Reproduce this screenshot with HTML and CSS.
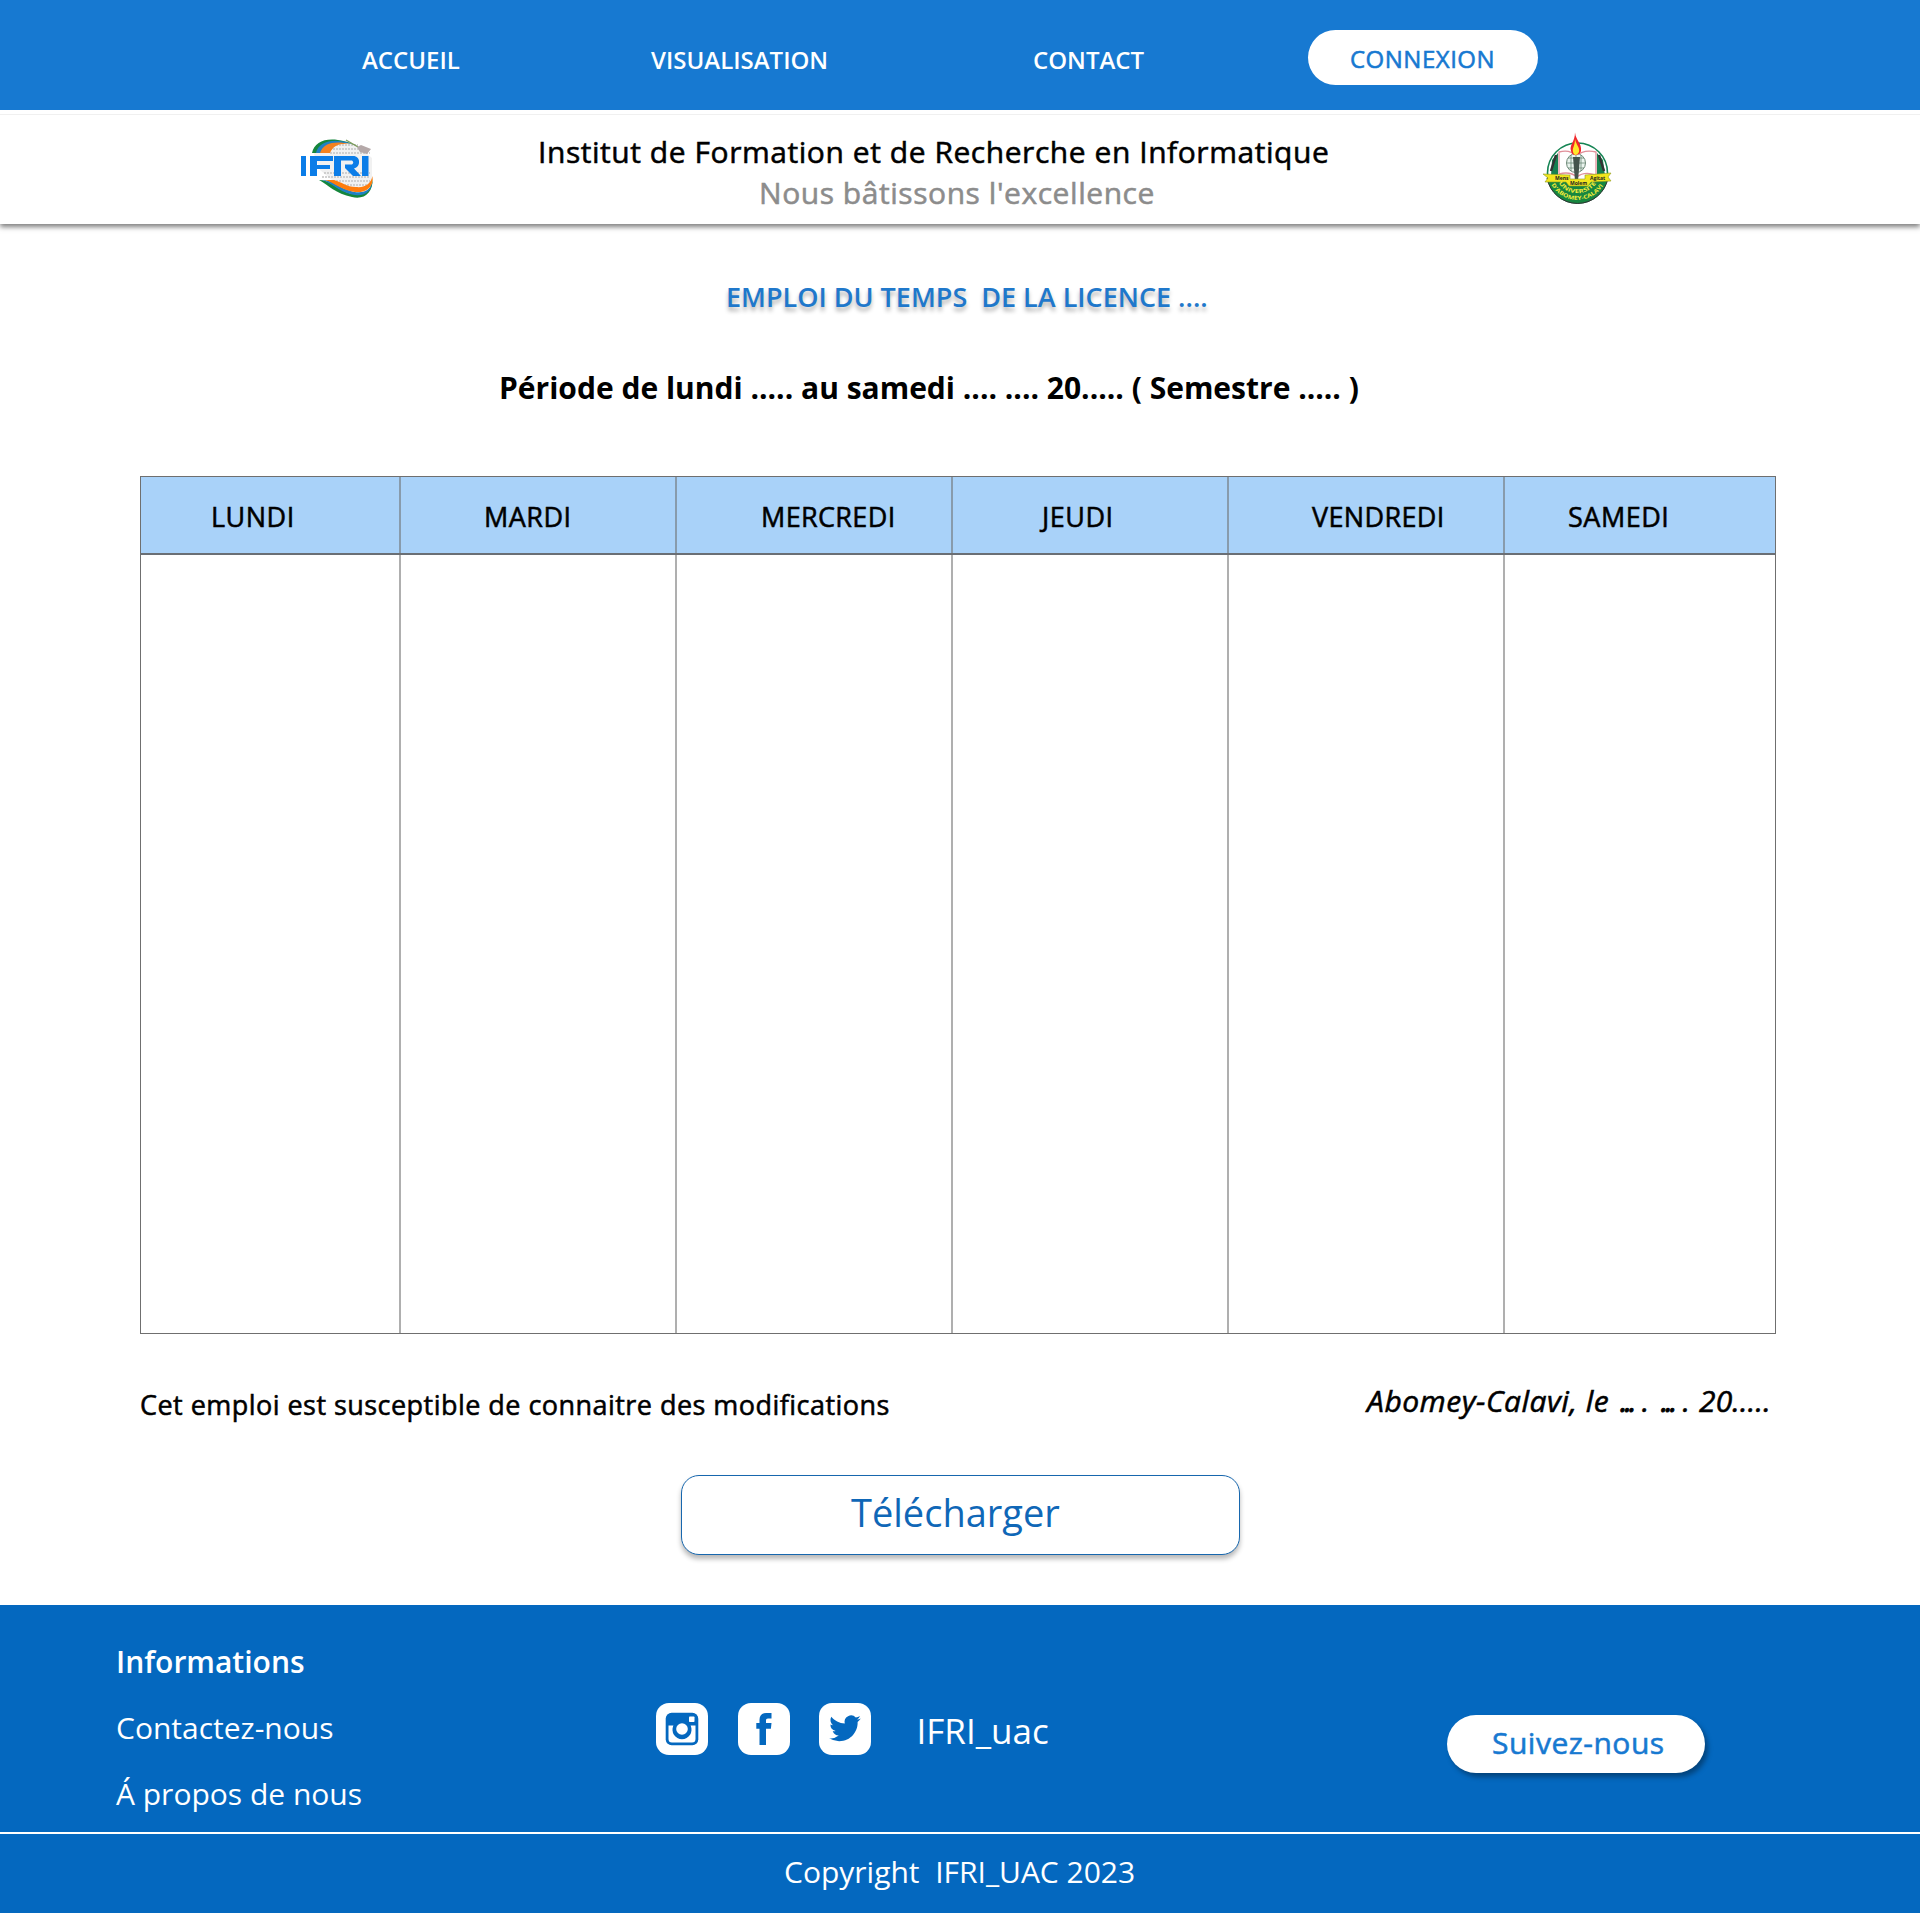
FILE: index.html
```html
<!DOCTYPE html>
<html lang="fr">
<head>
<meta charset="utf-8">
<title>IFRI - Emploi du temps</title>
<link rel="stylesheet" href="styles.css">
</head>
<body>
<nav class="nav">
  <a class="nav-link nav-home">ACCUEIL</a>
  <a class="nav-link nav-view">VISUALISATION</a>
  <a class="nav-link nav-contact">CONTACT</a>
  <a class="login medium"><span>CONNEXION</span></a>
</nav>
<header class="banner">
  <svg class="logo-ifri" viewBox="0 0 120 90" width="120" height="90">
    <path d="M34 34C38 24 50 20 60 20C70 21 77 24 80 28L92 38V62L90 70C76 74 62 66 52 60L40 50Z" fill="#f1f1f1"/>
    <path d="M50 25H78M50 29H84M50 33H90M44 53H90M42 57H90M50 61H90M58 65H88" stroke="#c4c4c4" stroke-width="1.400" stroke-dasharray="2 1"/>
    <path d="M32 33C35 18 54 15 78 26C60 19 48 23 42 33Z" fill="#15863c"/>
    <path d="M36 33C39 20 56 18 72 24C58 21 49 25 45 33Z" fill="#2080c4"/>
    <path d="M40 33C44 22 56 21 70 24C59 23 53 26 50 33Z" fill="#f5821f"/>
    <path d="M39 60C50 60 54 67 66 72C78 77 92 74 92.500 58C93.500 73 84 80 72 77C56 74 48 65 39 60Z" fill="#15863c"/>
    <path d="M42 60C53 60 56 66 68 70C80 75 92 72 92.500 60C92.500 72 84 77 72 74.500C58 71 52 63 42 60Z" fill="#2080c4"/>
    <path d="M45 60H54C62 62 66 67 76 67C86 68 91 63 92.500 56C94 68 85 73 75 72C60 70 54 62 45 60Z" fill="#ff7d0d"/>
    <path d="M66 20L78 27" stroke="#7d9b58" stroke-width="1.300"/>
    <path d="M77 27L81 25L91 29L87 34L80 32Z" fill="#b5a9a9"/>
    <path d="M21 36H26V56H21ZM30 36H53V41H37V45H50V49H37V56H30ZM54 36H73C81 36 81 47 74 48.500L81 56H73L65 48V44.500H72Q74.500 42.500 72 40.500H61V56H54ZM82 36H88.500V56H82Z" fill="#0b7de8"/>
  </svg>
  <div class="banner-text medium">
    <div class="school">Institut de Formation et de Recherche en Informatique</div>
    <div class="motto">Nous bâtissons l'excellence</div>
  </div>
  <svg class="logo-uac" viewBox="0 0 100 95" width="100" height="95">
    <circle cx="47.500" cy="53" r="30" fill="#fff" stroke="#148453" stroke-width="1.600"/>
    <path d="M17 58A31 31 0 0 0 78 58L48 64Z" fill="#168640" stroke="#333" stroke-width="1"/>
    <path d="M22 40L28 33V56H21ZM73 40L67 33V56H75Z" fill="#168050"/>
    <path d="M26 35L21 51M69 35L74 51" stroke="#333" stroke-width="2.500"/>
    <path d="M29 32Q40 29 46 36Q54 29 66 32V55Q54 51 47 57Q40 51 29 54Z" fill="#fff" stroke="#e0909a" stroke-width="1.300"/>
    <circle cx="46" cy="43" r="9.500" fill="#eaf4ee" stroke="#6b8876"/>
    <path d="M37 43H55M38 38H54M38 48H54M41 35V51M46 33V53M51 35V51" stroke="#6b8876" fill="none" stroke-width=".8"/>
    <path d="M43 37H50L48 61H45Z" fill="#43534c"/>
    <path d="M45 12.500C46 21 52 23 51 31C50 36 42 37 41 31C39 25 45 22 45 12.500Z" fill="#f0262c"/>
    <path d="M45 19C46 25 50 27 49 32C47 36 44 36 43 32C42 28 45 26 45 19Z" fill="#ffe62c"/>
    <path d="M13 54L40 55V59L55 59V55L81 53L78 57L81 61L61 62L58 66H39L36 62L15 62L18 58Z" fill="#f2e61d" stroke="#8f9b20" stroke-width=".6"/>
    <path id="uac-inner" d="M27.500 61.500A23 23 0 0 0 67.500 61.500" fill="none"/>
    <path id="uac-outer" d="M20.500 63A30 30 0 0 0 74.500 63" fill="none"/>
    <text class="seal-words"><tspan class="ribbon-word" x="25" y="60">Mens</tspan><tspan class="ribbon-word" x="40" y="64.500">Molem</tspan><tspan class="ribbon-word" x="60" y="60">Agitat</tspan><textPath href="#uac-inner" startOffset="2" textLength="44" lengthAdjust="spacingAndGlyphs">UNIVERSITE</textPath><textPath href="#uac-outer" startOffset="2" textLength="62" lengthAdjust="spacingAndGlyphs">D'ABOMEY-CALAVI</textPath></text>
  </svg>
</header>
<main class="main">
  <h1 class="title">EMPLOI DU TEMPS&nbsp; DE LA LICENCE ....</h1>
  <h2 class="period">Période de lundi ..... au samedi .... .... 20..... ( Semestre ..... )</h2>
  <div class="timetable">
    <div class="day"><div class="day-name medium d1">LUNDI</div></div>
    <div class="day"><div class="day-name medium d2">MARDI</div></div>
    <div class="day"><div class="day-name medium d3">MERCREDI</div></div>
    <div class="day"><div class="day-name medium d4">JEUDI</div></div>
    <div class="day"><div class="day-name medium d5">VENDREDI</div></div>
    <div class="day"><div class="day-name medium d6">SAMEDI</div></div>
  </div>
  <div class="notes">
    <p class="notice medium">Cet emploi est susceptible de connaitre des modifications</p>
    <p class="place medium">Abomey-Calavi, le <span class="dots">...</span> . <span class="dots">...</span> . <span class="year">20.....</span></p>
  </div>
  <button class="download"><span>Télécharger</span></button>
</main>
<footer class="footer">
  <div class="footer-main">
    <div class="info">
      <strong class="info-title">Informations</strong>
      <a class="info-contact">Contactez-nous</a>
      <a class="info-about">Á propos de nous</a>
    </div>
    <div class="social">
      <svg class="icon" viewBox="0 0 52 52" width="52" height="52">
        <rect width="52" height="52" rx="13" fill="#fff"/>
        <rect x="9.700" y="9.700" width="32.600" height="32.600" rx="6" fill="#0468bf"/>
        <path d="M12.500 22.500H17.500A9.500 9.500 0 1 0 34.500 22.500H39.500V36A3.500 3.500 0 0 1 36 39.500H16A3.500 3.500 0 0 1 12.500 36Z" fill="#fff"/>
        <circle cx="26" cy="26" r="9" fill="#0468bf"/>
        <circle cx="26" cy="26" r="5.800" fill="#fff"/>
        <rect x="33" y="13.500" width="5.500" height="5.500" rx=".8" fill="#fff"/>
      </svg>
      <svg class="icon" viewBox="0 0 52 52" width="52" height="52">
        <rect width="52" height="52" rx="13" fill="#fff"/>
        <path d="M33.500 10V15.500H30C28.500 15.500 28 16.300 28 17.500V20H33.500L32.900 25.800H28V42H21.500V25.800H18.300V20H21.500V17C21.500 12.500 24 10 28.200 10Z" fill="#0468bf"/>
      </svg>
      <svg class="icon" viewBox="0 0 52 52" width="52" height="52">
        <rect width="52" height="52" rx="13" fill="#fff"/>
        <path transform="translate(10.200 9.500) scale(1.320)" d="M23.950 4.570a10 10 0 0 1-2.820.77 4.960 4.960 0 0 0 2.160-2.720c-.95.550-2 .95-3.130 1.180a4.920 4.920 0 0 0-8.380 4.480C7.690 8.100 4.070 6.130 1.640 3.160a4.820 4.820 0 0 0-.67 2.480c0 1.710.87 3.210 2.190 4.100a4.900 4.900 0 0 1-2.230-.62v.06a4.920 4.920 0 0 0 3.950 4.830 5 5 0 0 1-2.210.08 4.940 4.940 0 0 0 4.600 3.420A9.870 9.870 0 0 1 0 19.540a13.990 13.990 0 0 0 7.550 2.210c9.050 0 14-7.500 14-13.980 0-.21 0-.42-.02-.63a9.930 9.930 0 0 0 2.420-2.570z" fill="#0468bf"/>
      </svg>
      <span class="handle">IFRI_uac</span>
    </div>
    <a class="follow medium"><span>Suivez-nous</span></a>
  </div>
  <div class="copyright"><span>Copyright&nbsp; IFRI_UAC 2023</span></div>
</footer>
</body>
</html>
```
FILE: styles.css
```css
* { box-sizing: border-box; }
body { margin: 0; background: #fff; color: #000; font-family: "Open Sans", "Noto Sans", sans-serif; font-weight: 400; white-space: nowrap; }
h1, h2, p { margin: 0; }

/* Medium weight: regular glyphs, slightly thickened and spaced */
.medium { font-weight: 400; -webkit-text-stroke: .55px currentColor; letter-spacing: .5px; }

.nav { display: flex; height: 110px; background: #1779d1; color: #fff; font-size: 24px; font-weight: 600; line-height: 34px; padding: 30px 0 0 362px; }
.nav-link { padding-top: 13px; }
.nav-home { width: 289px; }
.nav-view { width: 382px; }
.nav-contact { width: 275px; }
.login { width: 230px; height: 55px; border-radius: 28px; background: #fff; color: #1779d1; padding: 12px 0 0 42px; }

.banner { display: flex; height: 110px; margin-top: 4px; border-top: 1px solid #f0f0f0; box-shadow: 0 3px 5px rgba(0, 0, 0, .5); padding-left: 280px; clip-path: inset(0 0 -15px 0); }
.logo-ifri { margin-top: 5px; }
.banner-text { width: 1130px; padding: 16px 0 0 138px; font-size: 30px; line-height: 41px; letter-spacing: .55px; }
.motto { color: #8c8c8c; padding-left: 221px; }
.logo-uac { margin-top: 5px; }
.seal-words { font: bold 5.500px "Open Sans", sans-serif; fill: #f4ec3b; }
.ribbon-word { font-size: 5px; fill: #222; }

.main { height: 1381px; padding: 53px 144px 0 140px; }
.title { margin-left: 586px; font-size: 27px; line-height: 40px; font-weight: 600; color: #1f78cb; text-shadow: 0 4px 4px rgba(0, 0, 0, .3); }
.period { margin: 50px 0 0 359px; font-size: 30px; line-height: 42px; font-weight: 700; }
.timetable { display: grid; grid-template-columns: 258px repeat(4, 276px) 272px; height: 858px; margin-top: 67px; border: 1px solid #6f6f6f; }
.day + .day { border-left: 2px solid rgba(110, 110, 110, .55); }
.day { background: linear-gradient(#6a6f75, #6a6f75) 0 76px / 100% 2px no-repeat border-box, linear-gradient(#a9d2f9, #a9d2f9) 0 0 / 100% 76px no-repeat border-box; }
.day-name { height: 78px; font-size: 27px; line-height: 80px; }
.d1 { padding-left: 70px; }
.d2 { padding-left: 83px; }
.d3 { padding-left: 84px; letter-spacing: .35px; }
.d4 { padding-left: 89px; }
.d5 { padding-left: 83px; letter-spacing: .35px; }
.d6 { padding-left: 63px; }
.notes { display: flex; justify-content: space-between; padding: 47px 5px 0 0; }
.notice { padding-top: 4px; font-size: 27px; line-height: 40px; letter-spacing: .46px; }
.place { font-size: 30px; line-height: 40px; font-style: italic; }
.dots { letter-spacing: -3px; margin: 0 0 0 2.500px; -webkit-text-stroke-width: .9px; }
.year { letter-spacing: .2px; }
.download { display: block; width: 559px; height: 80px; margin: 50px 0 0 541px; padding: 0 0 0 169px; text-align: left; border: 1.500px solid #1767ae; border-radius: 18px; background: #fff; box-shadow: 0 4px 5px rgba(0, 0, 0, .28); color: #0f67b7; font: 400 38px/52px "Open Sans", sans-serif; }
.download span { display: block; margin-top: -7px; }

.footer { height: 308px; background: #0468bf; color: #fff; }
.footer-main { display: flex; height: 229px; border-bottom: 2px solid #fff; padding-left: 116px; }
.info { display: flex; flex-direction: column; width: 540px; padding-top: 36px; font-size: 30px; line-height: 42px; gap: 24px; }
.info-title { font-weight: 600; }
.social { display: flex; width: 791px; padding-top: 98px; gap: 29.500px; }
.handle { padding-left: 16px; font-size: 35px; line-height: 56px; }
.follow { width: 258px; height: 58px; margin-top: 110px; border-radius: 29px; background: #fff; color: #1779d1; box-shadow: 3px 4px 5px rgba(0, 0, 0, .35); font-size: 30px; line-height: 56px; padding-left: 45px; }
.copyright { padding-left: 784px; font-size: 30px; line-height: 75px; }
```
